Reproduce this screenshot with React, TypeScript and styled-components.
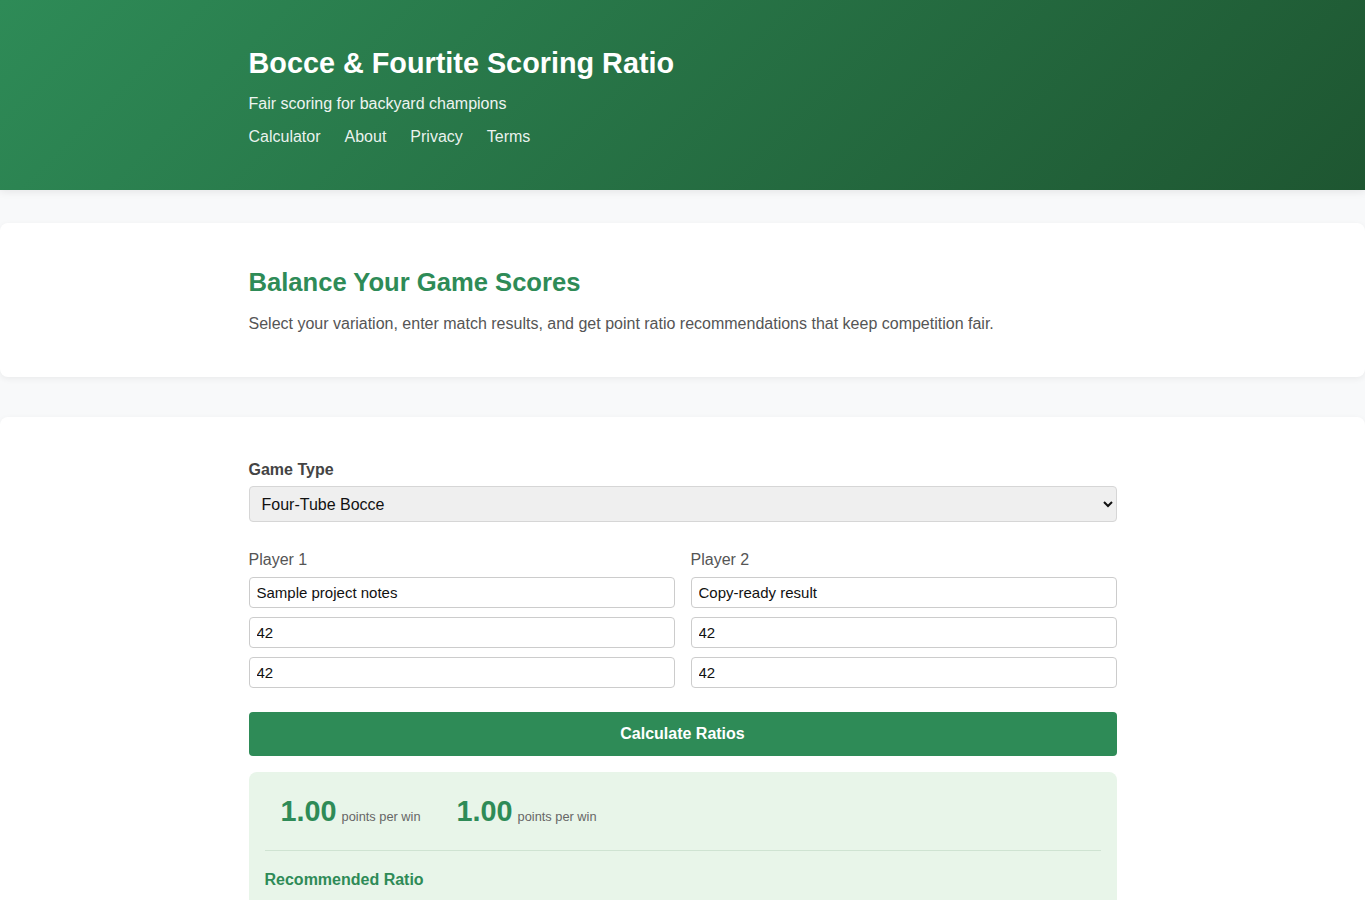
import React from "react";
import styled, { createGlobalStyle } from "styled-components";

const GlobalStyle = createGlobalStyle`
  html, body {
    margin: 0;
    padding: 0;
    background: #f8f9fa;
    font-family: "Liberation Sans", Arial, sans-serif;
    color: #333;
  }
  * { box-sizing: border-box; }
`;

const Header = styled.header`
  background: linear-gradient(135deg, #2e8b57 0%, #1e5631 100%);
  color: #fff;
  padding: 45px 0 43px;
  box-shadow: 0 2px 8px rgba(0, 0, 0, 0.08);
`;

const Container = styled.div`
  width: 868px;
  margin: 0 auto;
`;

const Title = styled.h1`
  margin: 0;
  font-size: 28.8px;
  line-height: 36px;
  font-weight: 700;
`;

const Subtitle = styled.p`
  margin: 13px 0 0;
  font-size: 16px;
  line-height: 20px;
  opacity: 0.92;
`;

const Nav = styled.nav`
  display: flex;
  gap: 24px;
  margin-top: 13px;
`;

const NavLink = styled.a`
  color: rgba(255, 255, 255, 0.92);
  text-decoration: none;
  font-size: 16px;
  line-height: 20px;
`;

const Main = styled.main`
  display: flex;
  flex-direction: column;
  gap: 40px;
  padding-top: 33px;
`;

const Card = styled.section<{ $pt: number; $pb: number }>`
  background: #fff;
  border-radius: 8px;
  box-shadow: 0 2px 6px rgba(0, 0, 0, 0.06);
  padding: ${(p) => p.$pt}px 0 ${(p) => p.$pb}px;
`;

const HeroTitle = styled.h2`
  margin: 0;
  color: #2e8b57;
  font-size: 25.6px;
  line-height: 32px;
  font-weight: 700;
`;

const HeroText = styled.p`
  margin: 16px 0 0;
  color: #555;
  font-size: 16px;
  line-height: 20px;
`;

const FieldLabel = styled.label<{ $bold?: boolean }>`
  display: block;
  font-size: 16px;
  line-height: 20px;
  color: ${(p) => (p.$bold ? "#444" : "#555")};
  font-weight: ${(p) => (p.$bold ? 700 : 400)};
`;

const Select = styled.select`
  display: block;
  width: 100%;
  height: 36px;
  margin-top: 6px;
  padding: 0 8px;
  font-family: "Liberation Sans", Arial, sans-serif;
  font-size: 16px;
  color: #111;
  background: #efefef;
  border: 1px solid #d6d6d6;
  border-radius: 4px;
`;

const PlayersGrid = styled.div`
  display: grid;
  grid-template-columns: 1fr 1fr;
  gap: 16px;
  margin-top: 28px;
`;

const PlayerCol = styled.div`
  display: flex;
  flex-direction: column;
`;

const Inputs = styled.div`
  display: flex;
  flex-direction: column;
  gap: 9px;
  margin-top: 7px;
`;

const Input = styled.input`
  width: 100%;
  height: 31px;
  padding: 0 7px;
  font-family: "Liberation Sans", Arial, sans-serif;
  font-size: 15px;
  color: #111;
  background: #fff;
  border: 1px solid #ccc;
  border-radius: 4px;
`;

const Button = styled.button`
  display: block;
  width: 100%;
  height: 44px;
  margin-top: 24px;
  background: #2e8b57;
  color: #fff;
  border: none;
  border-radius: 4px;
  font-family: "Liberation Sans", Arial, sans-serif;
  font-size: 16px;
  font-weight: 700;
  cursor: pointer;
`;

const Results = styled.div`
  margin-top: 16px;
  background: #e8f5e9;
  border-radius: 8px;
  padding: 16px 16px 40px;
`;

const Stats = styled.div`
  display: flex;
  padding-bottom: 16px;
  border-bottom: 1px solid #cfe3d2;
`;

const Stat = styled.div`
  display: flex;
  align-items: baseline;
  padding: 6px 16px;
  width: 176px;
`;

const StatValue = styled.span`
  font-size: 28.8px;
  line-height: 34px;
  font-weight: 700;
  color: #2e8b57;
`;

const StatUnit = styled.span`
  font-size: 12.8px;
  color: #666;
  margin-left: 5px;
`;

const ResultHeading = styled.h3`
  margin: 19px 0 0;
  font-size: 16px;
  line-height: 20px;
  font-weight: 700;
  color: #2e8b57;
`;

export default function App() {
  return (
    <>
      <GlobalStyle />
      <Header>
        <Container>
          <Title>Bocce &amp; Fourtite Scoring Ratio</Title>
          <Subtitle>Fair scoring for backyard champions</Subtitle>
          <Nav>
            <NavLink href="#">Calculator</NavLink>
            <NavLink href="#">About</NavLink>
            <NavLink href="#">Privacy</NavLink>
            <NavLink href="#">Terms</NavLink>
          </Nav>
        </Container>
      </Header>
      <Main>
        <Card $pt={43} $pb={43}>
          <Container>
            <HeroTitle>Balance Your Game Scores</HeroTitle>
            <HeroText>
              Select your variation, enter match results, and get point ratio recommendations that keep competition fair.
            </HeroText>
          </Container>
        </Card>
        <Card $pt={43} $pb={40}>
          <Container>
            <FieldLabel $bold>Game Type</FieldLabel>
            <Select defaultValue="four">
              <option value="four">Four-Tube Bocce</option>
              <option value="classic">Classic Bocce</option>
              <option value="fourtite">Fourtite</option>
            </Select>
            <PlayersGrid>
              <PlayerCol>
                <FieldLabel>Player 1</FieldLabel>
                <Inputs>
                  <Input defaultValue="Sample project notes" />
                  <Input defaultValue="42" />
                  <Input defaultValue="42" />
                </Inputs>
              </PlayerCol>
              <PlayerCol>
                <FieldLabel>Player 2</FieldLabel>
                <Inputs>
                  <Input defaultValue="Copy-ready result" />
                  <Input defaultValue="42" />
                  <Input defaultValue="42" />
                </Inputs>
              </PlayerCol>
            </PlayersGrid>
            <Button>Calculate Ratios</Button>
            <Results>
              <Stats>
                <Stat>
                  <StatValue>1.00</StatValue>
                  <StatUnit>points per win</StatUnit>
                </Stat>
                <Stat>
                  <StatValue>1.00</StatValue>
                  <StatUnit>points per win</StatUnit>
                </Stat>
              </Stats>
              <ResultHeading>Recommended Ratio</ResultHeading>
            </Results>
          </Container>
        </Card>
      </Main>
    </>
  );
}
